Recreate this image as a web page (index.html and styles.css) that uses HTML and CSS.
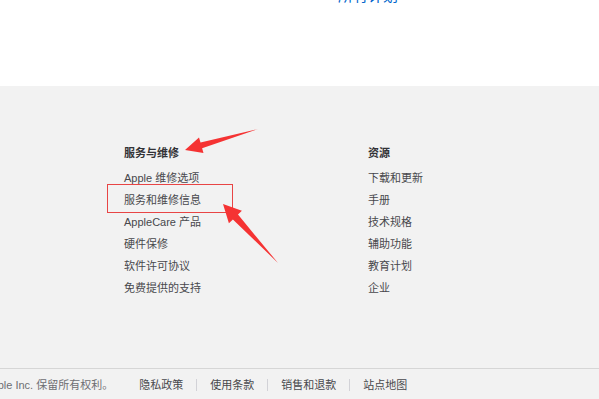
FILE: index.html
```html
<!DOCTYPE html>
<html lang="zh-CN">
<head>
	<meta charset="UTF-8">
	<title>服务与维修</title>
	<link rel="stylesheet" href="styles.css">
</head>
<body>
	<div class="top">
		<a class="plans" href="javascript:;">所有计划</a>
	</div>
	<div class="footer">
		<div class="directory">
			<div class="column">
				<h3>服务与维修</h3>
				<ul>
					<li><a href="javascript:;">Apple 维修选项</a></li>
					<li class="marked"><a href="javascript:;">服务和维修信息</a></li>
					<li><a href="javascript:;">AppleCare 产品</a></li>
					<li><a href="javascript:;">硬件保修</a></li>
					<li><a href="javascript:;">软件许可协议</a></li>
					<li><a href="javascript:;">免费提供的支持</a></li>
				</ul>
			</div>
			<div class="column">
				<h3>资源</h3>
				<ul>
					<li><a href="javascript:;">下载和更新</a></li>
					<li><a href="javascript:;">手册</a></li>
					<li><a href="javascript:;">技术规格</a></li>
					<li><a href="javascript:;">辅助功能</a></li>
					<li><a href="javascript:;">教育计划</a></li>
					<li><a href="javascript:;">企业</a></li>
				</ul>
			</div>
		</div>
		<div class="legal">
			<span class="copyright">Copyright © 2024 Apple Inc. 保留所有权利。</span>
			<a href="javascript:;">隐私政策</a>
			<a href="javascript:;">使用条款</a>
			<a href="javascript:;">销售和退款</a>
			<a href="javascript:;">站点地图</a>
		</div>
		<!-- 标注箭头 -->
		<svg class="marks" width="599" height="313" viewBox="0 86 599 313">
			<polygon points="185,150 199,137.6 200.5,142.4 258,129 202.1,148.2 203.5,153" fill="#f53333"/>
			<polygon points="223,204 241.9,210.8 238,214.6 278,263 232.9,219.4 228.9,223.2" fill="#f53333"/>
		</svg>
	</div>
</body>
</html>
```

FILE: styles.css
```css
* {margin: 0;padding: 0}
body {background: #fff;font-family: "Liberation Sans", "Noto Sans CJK SC", sans-serif;overflow: hidden;}
a {text-decoration: none;}
ul {list-style: none;}

.top {height: 86px;display: flow-root;}
.top .plans {display: block;margin: -14px 0 0 338px;font-size: 15px;line-height: 20px;color: #0066cc;}

.footer {background: #f2f2f2;height: 313px;position: relative;}
.directory {display: flex;padding: 58px 0 0 124px;height: 224px;box-sizing: border-box;}
.column {width: 244px;flex-shrink: 0;}
.column h3 {font-size: 11px;line-height: 18px;font-weight: bold;color: #333336;margin-bottom: 5px;}
.column li {font-size: 11px;line-height: 22px;}
.column li a {color: #48484c;}
.column li a:first-letter {letter-spacing: 0;}
.column li.marked {position: relative;}
.column li.marked::after {content: "";position: absolute;left: -17px;top: -5px;width: 124px;height: 27px;border: 1px solid #e84545;}

.legal {border-top: 1px solid #d6d6d6;margin-top: 58px;padding-top: 7px;display: flex;align-items: center;font-size: 11px;line-height: 18px;color: #6e6e73;white-space: nowrap;}
.legal .copyright {margin-left: -104px;margin-right: 26px;}
.legal a {color: #48484c;padding: 0 13px;border-left: 1px solid #d2d2d7;line-height: 12px;}
.legal .copyright + a {border-left: none;padding-left: 0;}

.marks {position: absolute;left: 0;top: 0;pointer-events: none;}
```
